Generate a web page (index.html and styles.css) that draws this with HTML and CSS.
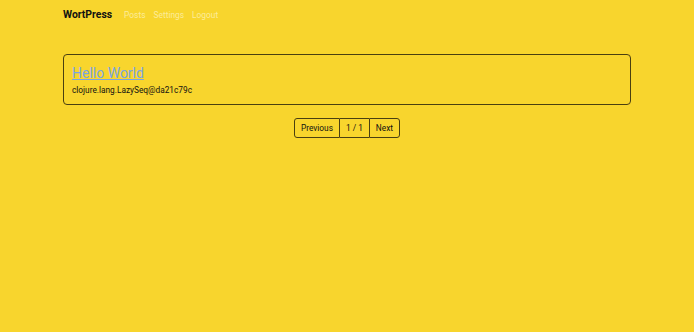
FILE: index.html
```html
<!DOCTYPE html>
<html lang="en">
<head>
  <meta charset="UTF-8" />
  <title>WortPress</title>
  <link rel="stylesheet" href="styles.css">
</head>
<body>

<nav class="navbar">
  <a class="brand" href="#">WortPress</a>
  <a class="nav-link" href="#">Posts</a>
  <a class="nav-link" href="#">Settings</a>
  <a class="nav-link" href="#">Logout</a>
</nav>

<main class="container">
  <div class="post-card">
    <a class="post-title" href="#">Hello World</a>
    <div class="post-body">clojure.lang.LazySeq@da21c79c</div>
  </div>

  <div class="pagination">
    <button>Previous</button>
    <span class="page-num">1 / 1</span>
    <button>Next</button>
  </div>
</main>

</body>
</html>
```

FILE: styles.css
```css
body {
  margin: 0;
  font-family: Roboto, "Liberation Sans", sans-serif;
  background-color: #f8d52d;
  color: #111;
}

.navbar {
  width: 568px;
  margin: 0 auto;
  height: 29px;
  display: flex;
  align-items: center;
  gap: 8px;
}

.navbar a {
  text-decoration: none;
}

.brand {
  font-weight: bold;
  font-size: 10.4px;
  color: #111;
  margin-right: 4px;
}

.nav-link {
  font-size: 8.4px;
  color: #fcec9a;
}

.container {
  width: 568px;
  margin: 25px auto 0;
}

.post-card {
  border: 1px solid #4a3f10;
  border-radius: 4px;
  padding: 10px 8px 9px;
}

.post-title {
  display: block;
  font-size: 14px;
  color: #7aa5e0;
  text-decoration: underline;
  margin-bottom: 4px;
}

.post-body {
  font-size: 8.3px;
}

.pagination {
  display: flex;
  justify-content: center;
  margin-top: 13px;
}

.pagination button,
.pagination .page-num {
  font-family: inherit;
  font-size: 8.3px;
  color: #111;
  background: none;
  border: 1px solid #4a3f10;
  height: 20px;
  padding: 0 6px;
  display: flex;
  align-items: center;
  box-sizing: border-box;
}

.pagination button:first-child {
  border-radius: 3px 0 0 3px;
}

.pagination .page-num {
  border-left: none;
  border-right: none;
}

.pagination button:last-child {
  border-radius: 0 3px 3px 0;
}
```
